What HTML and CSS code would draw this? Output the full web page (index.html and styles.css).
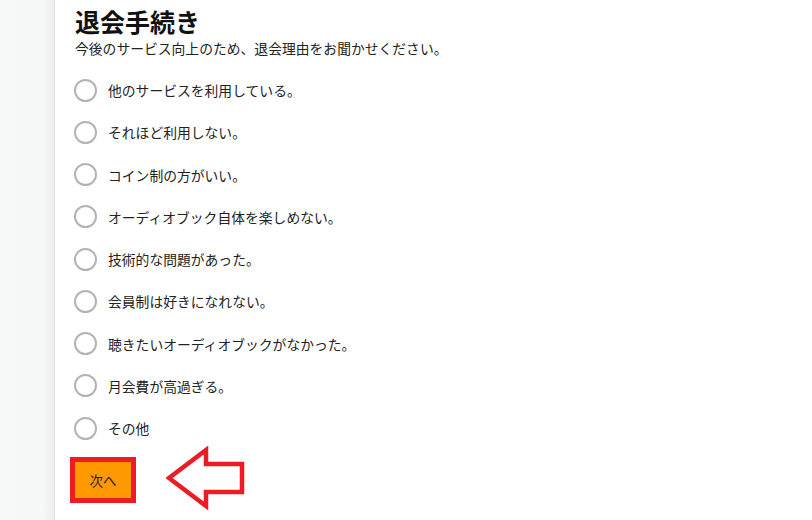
FILE: index.html
```html
<!DOCTYPE html>
<html lang="ja">
<head>
<meta charset="utf-8">
<link rel="stylesheet" href="styles.css">
</head>
<body>
<div class="page">
  <aside class="sidebar"></aside>
  <main class="main">
    <h1 class="title">退会手続き</h1>
    <p class="lead">今後のサービス向上のため、退会理由をお聞かせください。</p>
    <ul class="options">
      <li class="option"><span class="radio"></span><span class="label">他のサービスを利用している。</span></li>
      <li class="option"><span class="radio"></span><span class="label">それほど利用しない。</span></li>
      <li class="option"><span class="radio"></span><span class="label">コイン制の方がいい。</span></li>
      <li class="option"><span class="radio"></span><span class="label">オーディオブック自体を楽しめない。</span></li>
      <li class="option"><span class="radio"></span><span class="label">技術的な問題があった。</span></li>
      <li class="option"><span class="radio"></span><span class="label">会員制は好きになれない。</span></li>
      <li class="option"><span class="radio"></span><span class="label">聴きたいオーディオブックがなかった。</span></li>
      <li class="option"><span class="radio"></span><span class="label">月会費が高過ぎる。</span></li>
      <li class="option"><span class="radio"></span><span class="label">その他</span></li>
    </ul>
    <div class="actions">
      <div class="highlight"><button class="next">次へ</button></div>
    </div>
    <svg class="arrow" width="84" height="66" viewBox="0 0 84 66">
      <polygon points="3,32 40,4 40,18 76,18 76,46 40,46 40,60" fill="none" stroke="#ed1c24" stroke-width="4.5" stroke-linejoin="miter"/>
    </svg>
  </main>
</div>
</body>
</html>
```
FILE: styles.css
```css
html, body {
  margin: 0;
  padding: 0;
  background: #ffffff;
  font-family: "Noto Sans CJK JP", "Noto Sans", sans-serif;
  color: #222;
}
.page {
  display: flex;
  height: 520px;
  overflow: hidden;
}
.sidebar {
  width: 55px;
  flex: none;
  background: linear-gradient(to right, #f7f8f8 0%, #f6f7f7 80%, #eeeeee 100%);
  border-right: 1px solid #e4e4e4;
  box-sizing: border-box;
}
.main {
  position: relative;
  flex: 1;
  padding: 6px 0 0 20px;
}
.title {
  margin: 0;
  font-size: 25px;
  line-height: 30px;
  font-weight: 700;
  color: #111;
}
.lead {
  margin: 2px 0 0;
  font-size: 13.8px;
  line-height: 20px;
  color: #222;
}
.options {
  list-style: none;
  margin: 11px 0 0;
  padding: 0;
}
.option {
  display: flex;
  align-items: center;
  height: 42.25px;
}
.radio {
  width: 23px;
  height: 23px;
  box-sizing: border-box;
  border: 2px solid #b3b3b3;
  border-radius: 50%;
  margin-left: -1px;
  flex: none;
}
.label {
  margin-left: 11px;
  font-size: 13.8px;
  color: #222;
}
.actions {
  margin-top: 8px;
  margin-left: -5px;
}
.highlight {
  display: inline-block;
  border: 5px solid #ed1c24;
}
.next {
  display: block;
  width: 56px;
  height: 36px;
  border: none;
  margin: 0;
  padding: 0;
  background: #ff9900;
  font-family: "Noto Sans CJK JP", sans-serif;
  font-size: 13.5px;
  color: #222;
}
.arrow {
  position: absolute;
  left: 111px;
  top: 446px;
}
```
